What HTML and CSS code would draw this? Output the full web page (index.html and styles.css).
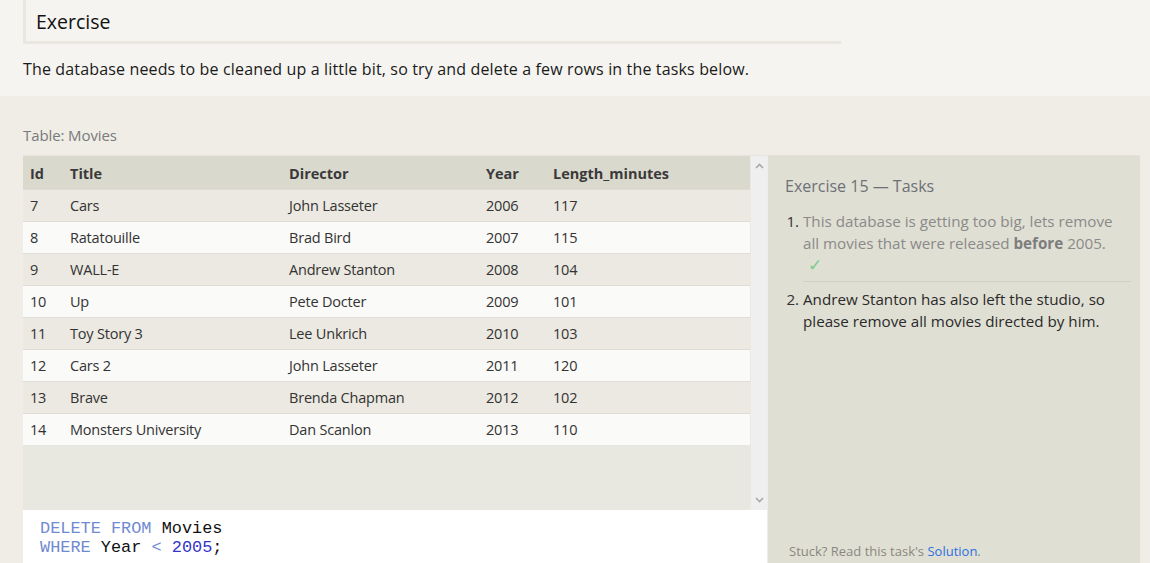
FILE: index.html
```html
<!DOCTYPE html>
<html>
<head>
<meta charset="utf-8">
<link rel="stylesheet" href="styles.css">
</head>
<body>
<section class="intro">
  <div class="heading">Exercise</div>
  <p class="lead">The database needs to be cleaned up a little bit, so try and delete a few rows in the tasks below.</p>
</section>
<section class="lower">
  <div class="caption">Table: Movies</div>
  <div class="workspace">
    <div class="left">
      <div class="scroll">
        <div class="tablewrap">
          <table class="movies">
            <thead>
              <tr><th class="c-id">Id</th><th class="c-title">Title</th><th class="c-dir">Director</th><th class="c-year">Year</th><th>Length_minutes</th></tr>
            </thead>
            <tbody>
              <tr><td>7</td><td>Cars</td><td>John Lasseter</td><td>2006</td><td>117</td></tr>
              <tr><td>8</td><td>Ratatouille</td><td>Brad Bird</td><td>2007</td><td>115</td></tr>
              <tr><td>9</td><td>WALL-E</td><td>Andrew Stanton</td><td>2008</td><td>104</td></tr>
              <tr><td>10</td><td>Up</td><td>Pete Docter</td><td>2009</td><td>101</td></tr>
              <tr><td>11</td><td>Toy Story 3</td><td>Lee Unkrich</td><td>2010</td><td>103</td></tr>
              <tr><td>12</td><td>Cars 2</td><td>John Lasseter</td><td>2011</td><td>120</td></tr>
              <tr><td>13</td><td>Brave</td><td>Brenda Chapman</td><td>2012</td><td>102</td></tr>
              <tr><td>14</td><td>Monsters University</td><td>Dan Scanlon</td><td>2013</td><td>110</td></tr>
            </tbody>
          </table>
        </div>
        <div class="scrollbar">
          <svg class="arrow" width="9" height="6" viewBox="0 0 9 6"><path d="M1 5 L4.5 1.5 L8 5" fill="none" stroke="#a8a8a8" stroke-width="1.6"/></svg>
          <svg class="arrow" width="9" height="6" viewBox="0 0 9 6"><path d="M1 1 L4.5 4.5 L8 1" fill="none" stroke="#a8a8a8" stroke-width="1.6"/></svg>
        </div>
      </div>
      <pre class="code"><span class="kw">DELETE FROM</span> Movies
<span class="kw">WHERE</span> Year <span class="op">&lt;</span> <span class="num">2005</span>;</pre>
    </div>
    <aside class="tasks">
      <div class="tasks-title">Exercise 15 — Tasks</div>
      <ol class="task-list">
        <li class="task done">This database is getting too big, lets remove all movies that were released <b>before</b> 2005.<span class="check">✓</span></li>
        <li class="task">Andrew Stanton has also left the studio, so please remove all movies directed by him.</li>
      </ol>
      <div class="stuck">Stuck? Read this task's <a class="sol">Solution</a>.</div>
    </aside>
  </div>
</section>
</body>
</html>
```
FILE: styles.css
```css
html, body {
  margin: 0;
  padding: 0;
}
body {
  font-family: "Open Sans", "Noto Sans", sans-serif;
  color: #222;
  background: #efede6;
  width: 1150px;
  height: 563px;
  overflow: hidden;
}
.intro {
  background: #f5f4f0;
  height: 96px;
  padding: 0 23px;
  box-sizing: border-box;
}
.heading {
  width: 805px;
  height: 41px;
  border-left: 3px solid #e9e7df;
  border-bottom: 3px solid #e9e7df;
  padding-left: 10px;
  font-size: 19.5px;
  line-height: 44px;
  box-sizing: content-box;
  color: #111;
}
.lead {
  margin: 13px 0 0 0;
  font-size: 16px;
  line-height: 24px;
  color: #1a1a1a;
  letter-spacing: 0.15px;
}
.lower {
  padding: 0 10px 0 23px;
}
.caption {
  padding-top: 29px;
  height: 30px;
  font-size: 15px;
  line-height: 20px;
  color: #7a7a7a;
  letter-spacing: -0.1px;
  box-sizing: content-box;
}
.workspace {
  display: flex;
  height: 409px;
}
.left {
  width: 744px;
  display: flex;
  flex-direction: column;
}
.scroll {
  display: flex;
  height: 355px;
  background: #ebe9e1;
  border-top: 1px solid #e6e4dc;
  box-sizing: border-box;
}
.tablewrap {
  width: 727px;
  background: #e9e8e0;
}
.movies {
  width: 100%;
  border-collapse: collapse;
  font-size: 14.5px;
  letter-spacing: -0.2px;
}
.movies th {
  background: #dad9cd;
  text-align: left;
  font-weight: 700;
  color: #3a3a3a;
  height: 32px;
  padding: 1px 0 0 7px;
  letter-spacing: 0;
}
.movies td {
  height: 31px;
  padding: 0 0 0 7px;
  border-top: 1px solid #dedcd4;
  color: #333;
}
.movies tbody tr:nth-child(odd) td {
  background: #ebe9e1;
}
.movies tbody tr:nth-child(even) td {
  background: #fafaf8;
}
.c-id { width: 33px; }
.c-title { width: 212px; }
.c-dir { width: 190px; }
.c-year { width: 60px; }
.scrollbar {
  width: 16px;
  margin-left: 1px;
  background: #efefef;
  display: flex;
  flex-direction: column;
  justify-content: space-between;
  align-items: center;
  padding: 7px 0 7px;
  box-sizing: border-box;
}
.arrow {
  display: block;
}
.code {
  flex: 1;
  margin: 0;
  background: #fff;
  padding: 9px 0 0 17px;
  font-family: "Liberation Mono", "Courier New", monospace;
  font-size: 16.9px;
  line-height: 19px;
  color: #111;
}
.kw { color: #708ad0; }
.op { color: #708ad0; }
.num { color: #3434c8; }
.tasks {
  width: 372px;
  margin-left: 1px;
  background: #e0dfd3;
  border-top: 1px solid #e4e2d8;
  box-sizing: border-box;
  position: relative;
  padding: 18px 9px 0 17px;
}
.tasks-title {
  font-size: 16px;
  line-height: 24px;
  color: #6e7078;
}
.task-list {
  margin: 12px 0 0 0;
  padding: 0 0 0 18px;
  font-size: 15.2px;
  line-height: 22px;
}
.task {
  padding-left: 0;
  color: #2a2a2a;
}
.task::marker {
  color: #333;
}
.task.done {
  color: #8a8a8a;
  padding-bottom: 5px;
  border-bottom: 1px solid #d2d0c6;
  margin-bottom: 6px;
}
.task.done b {
  color: #7d7d7d;
}
.check {
  display: block;
  color: #7ccc8c;
  padding-left: 5px;
  font-size: 17px;
  line-height: 22px;
}
.stuck {
  position: absolute;
  left: 21px;
  bottom: 4px;
  font-size: 13px;
  line-height: 18px;
  color: #8a8780;
}
.sol {
  color: #2d6fe0;
}
```
